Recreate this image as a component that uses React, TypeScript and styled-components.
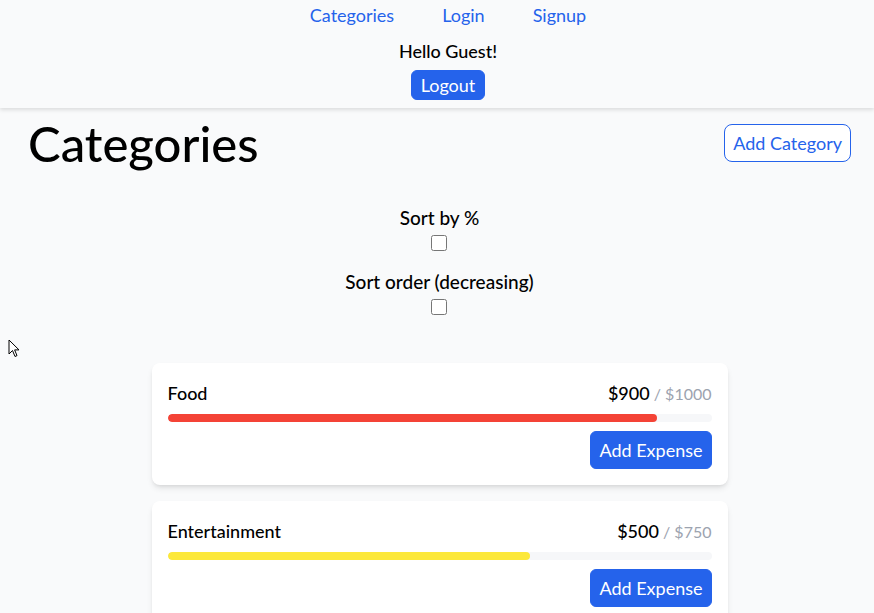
import React, { useState } from "react";
import styled, { createGlobalStyle } from "styled-components";

const GlobalStyle = createGlobalStyle`
  body {
    margin: 0;
    background-color: #f9fafb;
    font-family: "Lato", "Open Sans", sans-serif;
    color: #000;
  }
`;

const Header = styled.header`
  display: flex;
  flex-direction: column;
  align-items: center;
  padding: 1px 0 8px 22px;
  background-color: #f9fafb;
  box-shadow: 0 2px 4px rgba(0, 0, 0, 0.12);
`;

const Nav = styled.nav`
  display: flex;
  gap: 48px;
`;

const NavLink = styled.a`
  font-size: 18px;
  line-height: 28px;
  color: #2563eb;
  text-decoration: none;
  cursor: pointer;
`;

const Greeting = styled.p`
  margin: 10px 0 0;
  font-size: 18px;
  line-height: 24px;
  font-weight: 500;
`;

const Button = styled.button<{ $outline?: boolean }>`
  font-family: inherit;
  font-size: 18px;
  line-height: 28px;
  padding: 4px 8px;
  border-radius: ${({ $outline }) => ($outline ? "8px" : "6px")};
  border: 1px solid #2563eb;
  background-color: ${({ $outline }) => ($outline ? "#fff" : "#2563eb")};
  color: ${({ $outline }) => ($outline ? "#2563eb" : "#fff")};
  cursor: pointer;
`;

const LogoutButton = styled(Button)`
  margin-top: 7px;
  padding: 0 9px;
`;

const Main = styled.main`
  padding: 11px 23px 0 28px;
`;

const TitleRow = styled.div`
  display: flex;
  justify-content: space-between;
  align-items: center;
`;

const Title = styled.h1`
  margin: 0;
  font-size: 49px;
  line-height: 48px;
  font-weight: 500;
`;

const SortPanel = styled.div`
  display: flex;
  flex-direction: column;
  align-items: center;
  gap: 19px;
  margin-top: 39px;
`;

const SortOption = styled.label`
  display: flex;
  flex-direction: column;
  align-items: center;
  gap: 5px;
  font-size: 19px;
  line-height: 24px;
  font-weight: 500;
`;

const Checkbox = styled.input`
  width: 16px;
  height: 16px;
  margin: 0;
`;

const CardList = styled.div`
  display: flex;
  flex-direction: column;
  gap: 16px;
  width: 576px;
  margin: 48px auto 0;
`;

const Card = styled.div`
  display: flex;
  flex-direction: column;
  padding: 16px;
  background-color: #fff;
  border-radius: 8px;
  box-shadow: 0 4px 6px -1px rgba(0, 0, 0, 0.1), 0 2px 4px -2px rgba(0, 0, 0, 0.1);
`;

const CardHeader = styled.div`
  display: flex;
  justify-content: space-between;
  align-items: baseline;
`;

const CardName = styled.span`
  font-size: 18px;
  line-height: 28px;
  font-weight: 500;
`;

const Spent = styled.span`
  font-size: 18px;
  line-height: 28px;
  font-weight: 500;
`;

const Budget = styled.span`
  font-size: 16px;
  color: #9ca3af;
`;

const Track = styled.div`
  height: 8px;
  margin-top: 7px;
  border-radius: 9999px;
  background-color: #f6f7f9;
  overflow: hidden;
`;

const Fill = styled.div<{ $color: string }>`
  height: 100%;
  border-radius: 9999px;
  background-color: ${({ $color }) => $color};
`;

const CardFooter = styled.div`
  display: flex;
  justify-content: flex-end;
  margin-top: 9px;
`;

const Cursor = styled.svg`
  position: absolute;
  left: 8px;
  top: 339px;
  pointer-events: none;
`;

const categories = [
  { name: "Food", spent: 900, budget: 1000, color: "#f44336" },
  { name: "Entertainment", spent: 500, budget: 750, color: "#fce83a" },
];

export default function App() {
  const [byPercent, setByPercent] = useState(false);
  const [decreasing, setDecreasing] = useState(false);

  return (
    <>
      <GlobalStyle />
      <Header>
        <Nav>
          <NavLink>Categories</NavLink>
          <NavLink>Login</NavLink>
          <NavLink>Signup</NavLink>
        </Nav>
        <Greeting>Hello Guest!</Greeting>
        <LogoutButton>Logout</LogoutButton>
      </Header>
      <Main>
        <TitleRow>
          <Title>Categories</Title>
          <Button $outline>Add Category</Button>
        </TitleRow>
        <SortPanel>
          <SortOption>
            Sort by %
            <Checkbox
              type="checkbox"
              checked={byPercent}
              onChange={() => setByPercent(!byPercent)}
            />
          </SortOption>
          <SortOption>
            Sort order (decreasing)
            <Checkbox
              type="checkbox"
              checked={decreasing}
              onChange={() => setDecreasing(!decreasing)}
            />
          </SortOption>
        </SortPanel>
        <CardList>
          {categories.map((c) => (
            <Card key={c.name}>
              <CardHeader>
                <CardName>{c.name}</CardName>
                <span>
                  <Spent>${c.spent}</Spent> <Budget>/ ${c.budget}</Budget>
                </span>
              </CardHeader>
              <Track>
                <Fill
                  $color={c.color}
                  style={{ width: `${(c.spent / c.budget) * 100}%` }}
                />
              </Track>
              <CardFooter>
                <Button>Add Expense</Button>
              </CardFooter>
            </Card>
          ))}
        </CardList>
      </Main>
      <Cursor width="12" height="19" viewBox="0 0 12 19">
        <path
          d="M1 1 L1 15 L4.5 11.5 L7 17.5 L9 16.6 L6.6 10.9 L11 10.9 Z"
          fill="#fff"
          stroke="#000"
          strokeWidth="1"
          strokeLinejoin="round"
        />
      </Cursor>
    </>
  );
}
